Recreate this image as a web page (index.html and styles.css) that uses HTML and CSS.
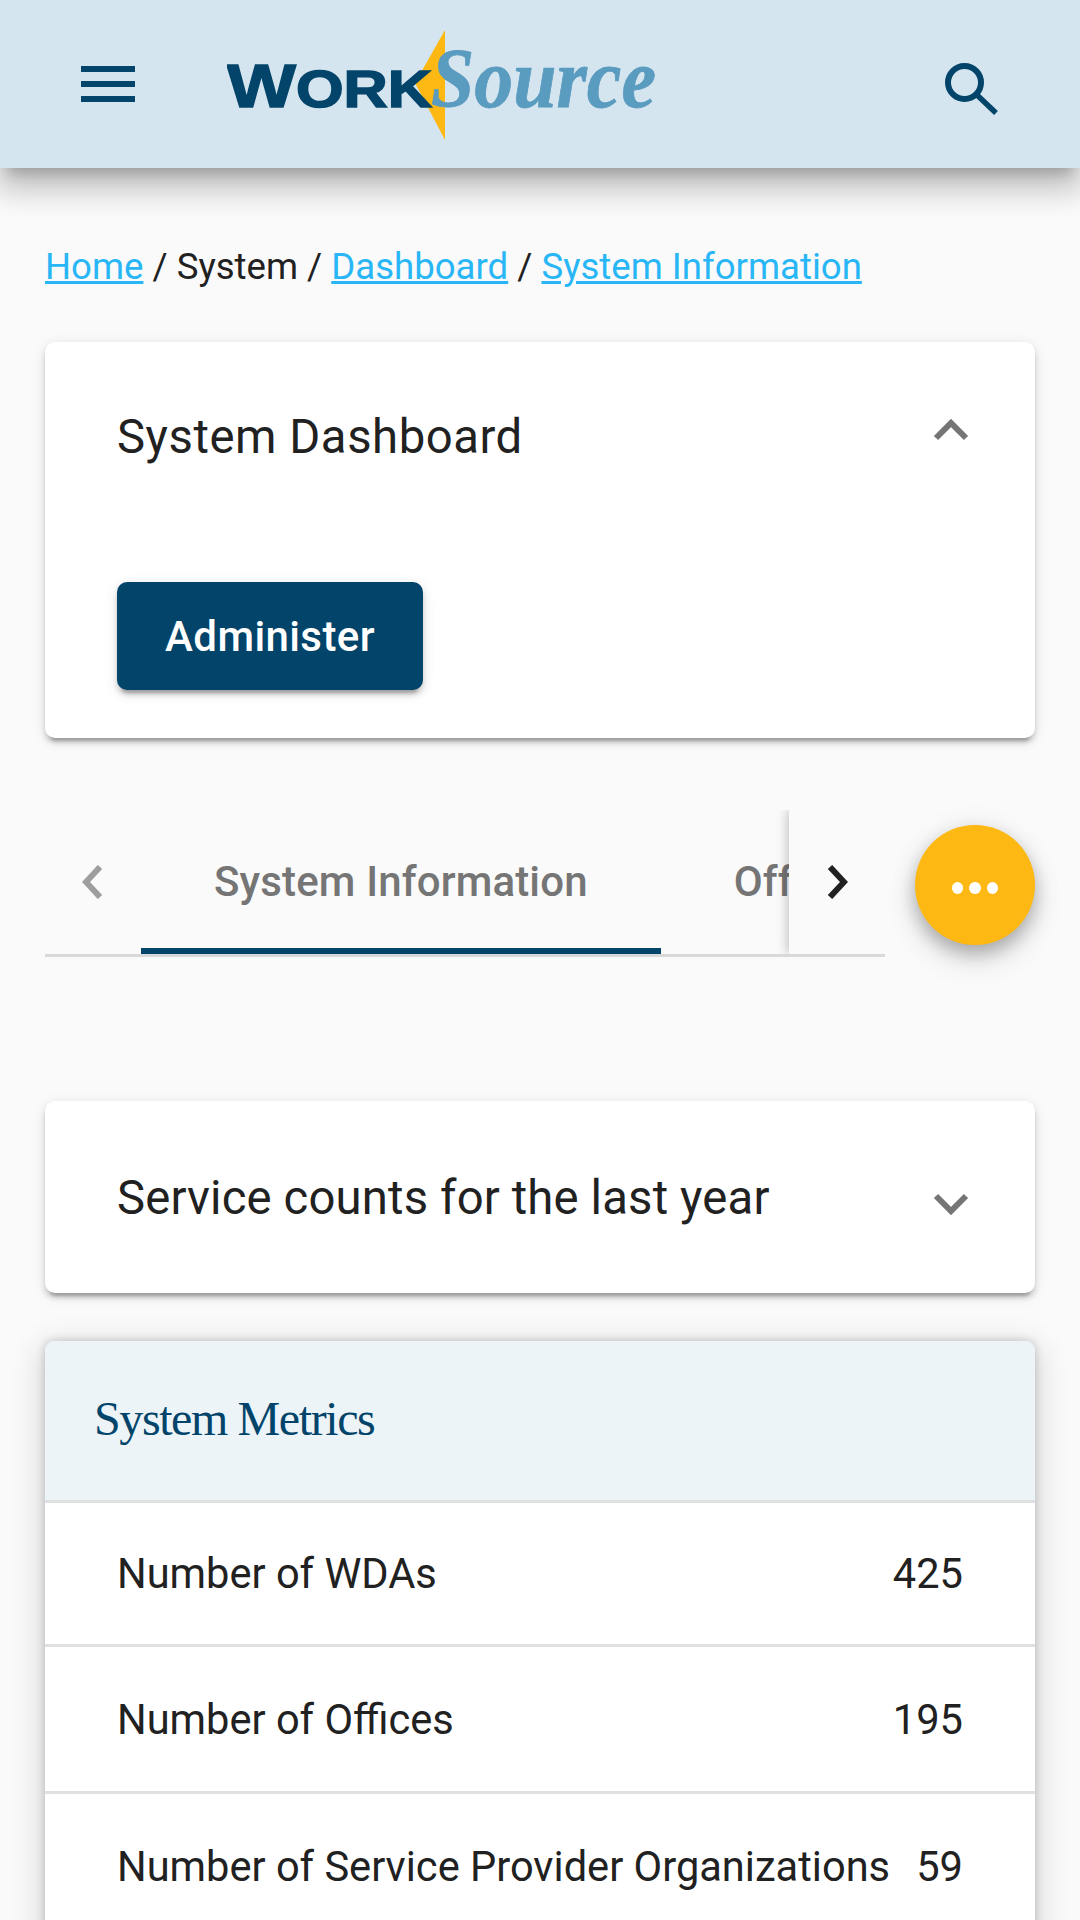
FILE: index.html
```html
<!DOCTYPE html>
<html lang="en">
<head>
    <meta charset="UTF-8">
    <meta name="viewport" content="width=device-width, initial-scale=1.0">
    <title>System Information</title>
    <link rel="stylesheet" href="styles.css">
</head>
<body>
    <header class="app-bar">
        <svg class="menu-icon" viewBox="0 0 54 36"><path d="M0 0h54v6H0zM0 15h54v6H0zM0 30h54v6H0z"/></svg>
        <svg class="logo" viewBox="0 0 430 110">
            <polygon class="logo-spark" points="218,0 218,110 188,53"/>
            <text class="logo-work" x="0" y="77" textLength="205" lengthAdjust="spacingAndGlyphs"><tspan class="logo-w">W</tspan>ORK</text>
            <text class="logo-source" x="204" y="77" textLength="225" lengthAdjust="spacingAndGlyphs">Source</text>
        </svg>
        <svg class="search-icon" viewBox="0 0 54 54"><circle cx="19.5" cy="19.5" r="16.5"/><path class="search-handle" d="M32 32l19 18"/></svg>
    </header>

    <main class="page">
        <nav class="crumbs">
            <a href="#">Home</a> / System / <a href="#">Dashboard</a> / <a href="#">System Information</a>
        </nav>

        <section class="card dash-card">
            <div class="card-head">
                <h2>System Dashboard</h2>
                <svg class="chevron up" viewBox="0 0 36 22"><path d="M3 19L18 4l15 15"/></svg>
            </div>
            <button class="primary-btn">Administer</button>
        </section>

        <div class="tabs-row">
            <div class="tabs">
                <div class="tab-arrow left"><svg viewBox="0 0 22 34"><path d="M18 2L4 17l14 15"/></svg></div>
                <div class="tab-window">
                    <div class="tab active">System Information</div>
                    <div class="tab">Offices</div>
                </div>
                <div class="tab-arrow right"><svg viewBox="0 0 22 34"><path d="M4 2l14 15L4 32"/></svg></div>
            </div>
            <button class="fab"><i></i><i></i><i></i></button>
        </div>

        <section class="card count-card">
            <h2>Service counts for the last year</h2>
            <svg class="chevron" viewBox="0 0 36 22"><path d="M3 3l15 15L33 3"/></svg>
        </section>

        <section class="card metrics">
            <h3>System Metrics</h3>
            <div class="metric-row"><span>Number of WDAs</span><span>425</span></div>
            <div class="metric-row"><span>Number of Offices</span><span>195</span></div>
            <div class="metric-row"><span>Number of Service Provider Organizations</span><span>59</span></div>
        </section>
    </main>
</body>
</html>
```

FILE: styles.css
```css
html, body {
    margin: 0;
    padding: 0;
    height: 1920px;
    overflow: hidden;
}

body {
    font-family: Roboto, "Liberation Sans", sans-serif;
    background-color: #fafafa;
    color: #212121;
}

.app-bar {
    position: relative;
    height: 168px;
    display: flex;
    align-items: center;
    background-color: #d5e5ef;
    box-shadow: 0 13px 13px -8px rgba(0, 0, 0, 0.2), 0 21px 26px 3px rgba(0, 0, 0, 0.14), 0 8px 37px 5px rgba(0, 0, 0, 0.12);
}

.menu-icon {
    width: 54px;
    height: 36px;
    margin-left: 81px;
    margin-top: -1px;
    fill: #03446a;
}

.logo {
    width: 430px;
    height: 110px;
    margin-left: 92px;
    margin-top: 1px;
}

.logo-spark {
    fill: #fdb813;
}

.logo-work {
    font-family: "Liberation Sans", sans-serif;
    font-weight: bold;
    font-size: 52px;
    fill: #03446a;
    stroke: #03446a;
    stroke-width: 1.5px;
}

.logo-w {
    font-size: 62px;
}

.logo-source {
    font-family: "Liberation Serif", serif;
    font-style: italic;
    font-weight: bold;
    font-size: 84px;
    fill: #5a9bc0;
    stroke: #5a9bc0;
    stroke-width: 0.8px;
}

.search-icon {
    width: 54px;
    height: 54px;
    margin-left: auto;
    margin-right: 81px;
    margin-top: 12px;
    fill: none;
    stroke: #03446a;
    stroke-width: 6;
}

.search-handle {
    stroke-width: 5.5;
}

.page {
    padding: 75px 45px 0;
}

.crumbs {
    font-size: 36.6px;
    line-height: 48px;
    margin-bottom: 51px;
}

.crumbs a {
    color: #29b6f6;
}

.card {
    background-color: #fff;
    border-radius: 10px;
    box-shadow: 0 8px 3px -5px rgba(0, 0, 0, 0.2), 0 5px 5px rgba(0, 0, 0, 0.14), 0 3px 13px rgba(0, 0, 0, 0.12);
}

h2 {
    margin: 0;
    font-size: 47.25px;
    font-weight: 400;
    line-height: 60px;
}

.dash-card {
    height: 396px;
    box-sizing: border-box;
    padding: 65px 66px 0 72px;
}

.dash-card h2 {
    letter-spacing: 0.55px;
}

.card-head {
    display: flex;
    justify-content: space-between;
    margin-bottom: 115px;
}

.chevron {
    width: 36px;
    height: 22px;
    fill: none;
    stroke: #757575;
    stroke-width: 6;
}

.chevron.up {
    margin-top: 12px;
}

.primary-btn {
    display: block;
    width: 306px;
    height: 108px;
    border: none;
    border-radius: 10px;
    background-color: #03446a;
    color: #fff;
    font-family: inherit;
    font-size: 42px;
    font-weight: 500;
    letter-spacing: 0.4px;
    box-shadow: 0 8px 3px -5px rgba(0, 0, 0, 0.2), 0 5px 5px rgba(0, 0, 0, 0.14), 0 3px 13px rgba(0, 0, 0, 0.12);
}

.tabs-row {
    position: relative;
    height: 147px;
    margin-top: 72px;
    margin-bottom: 144px;
}

.tabs {
    width: 840px;
    height: 147px;
    box-sizing: border-box;
    display: flex;
    border-bottom: 3px solid #d9d9d9;
}

.tab-arrow {
    width: 96px;
    flex: none;
    display: flex;
    align-items: center;
    justify-content: center;
}

.tab-arrow svg {
    width: 22px;
    height: 34px;
    fill: none;
    stroke-width: 6;
}

.tab-arrow.left svg {
    stroke: #9e9e9e;
}

.tab-arrow.right {
    box-shadow: -2px 0 10px rgba(0, 0, 0, 0.22);
    clip-path: inset(0 0 0 -14px);
    background-color: #fafafa;
    z-index: 1;
}

.tab-arrow.right svg {
    stroke: #212121;
}

.tab-window {
    flex: 1;
    display: flex;
    overflow: hidden;
}

.tab {
    flex: none;
    padding: 0 73px;
    line-height: 144px;
    height: 144px;
    box-sizing: border-box;
    font-size: 42px;
    font-weight: 500;
    letter-spacing: 0.15px;
    color: #757575;
}

.tab.active {
    border-bottom: 6px solid #03446a;
}

.fab {
    position: absolute;
    right: 0;
    top: 15px;
    width: 120px;
    height: 120px;
    padding: 6px 0 0;
    border: none;
    border-radius: 50%;
    background-color: #fdb813;
    display: flex;
    align-items: center;
    justify-content: center;
    gap: 6px;
    box-shadow: 0 8px 16px rgba(0, 0, 0, 0.2), 0 16px 30px rgba(0, 0, 0, 0.12), 0 3px 30px rgba(0, 0, 0, 0.08);
}

.fab i {
    width: 11.5px;
    height: 12px;
    border-radius: 50%;
    background-color: #fff;
}

.count-card {
    height: 192px;
    box-sizing: border-box;
    padding: 0 66px 0 72px;
    display: flex;
    align-items: center;
    justify-content: space-between;
}

.count-card h2 {
    letter-spacing: 0.15px;
    margin-top: 2px;
}

.count-card .chevron {
    margin-top: 14px;
}

.metrics {
    margin-top: 48px;
    box-shadow: 0 0 10px rgba(0, 0, 0, 0.2), 0 8px 30px 6px rgba(0, 0, 0, 0.12);
}

.metrics h3 {
    margin: 0;
    height: 162px;
    box-sizing: border-box;
    padding-left: 49px;
    line-height: 155px;
    font-family: "Liberation Serif", serif;
    font-size: 48px;
    font-weight: 400;
    letter-spacing: -1.4px;
    color: #03446a;
    background-color: #ecf4f8;
    border-radius: 10px 10px 0 0;
    border-bottom: 3px solid #e0e0e0;
}

.metric-row {
    display: flex;
    justify-content: space-between;
    gap: 8px;
    height: 147px;
    box-sizing: border-box;
    padding: 0 72px;
    align-items: center;
    font-size: 41.6px;
    white-space: nowrap;
    border-bottom: 3px solid #e0e0e0;
}

.metric-row:nth-child(2) {
    height: 144px;
}
```
